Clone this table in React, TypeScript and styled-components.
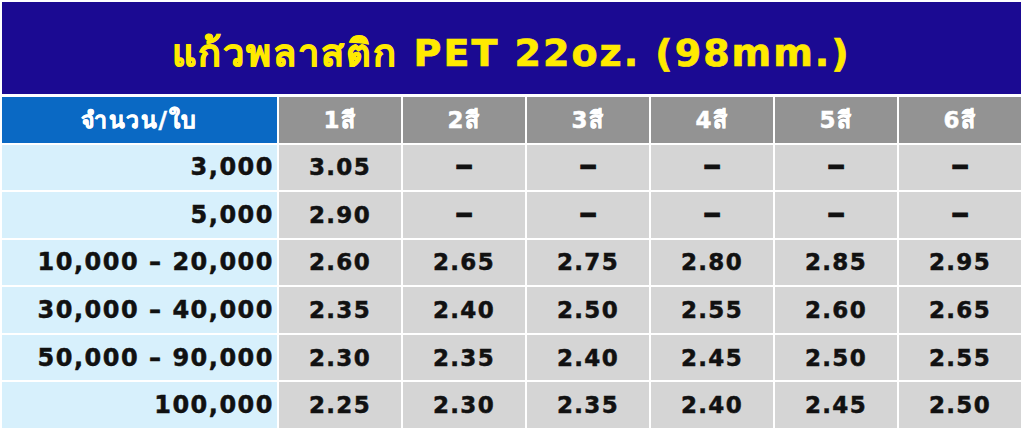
import styled, { createGlobalStyle } from 'styled-components';

const GlobalStyle = createGlobalStyle`
  html, body {
    margin: 0;
    padding: 0;
    background: #ffffff;
  }
  body {
    font-family: "DejaVu Sans", "Noto Sans", sans-serif;
  }
`;

const Sheet = styled.div`
  width: 1024px;
  height: 431px;
  box-sizing: border-box;
  padding: 2px 3px 3px 2px;
  background: #ffffff;
  display: flex;
  flex-direction: column;
  gap: 3px;
`;

const TitleBar = styled.div`
  height: 92px;
  background: #1b0a92;
  display: flex;
  align-items: center;
  justify-content: center;
`;

const Title = styled.h1`
  margin: 8px 0 0;
  color: #ffea00;
  font-size: 38px;
  font-weight: 700;
  letter-spacing: 2px;
  -webkit-text-stroke: 0.7px #ffea00;
`;

const PriceGrid = styled.div`
  flex: 1;
  display: grid;
  grid-template-columns: 275px repeat(6, 1fr);
  grid-auto-rows: 1fr;
  gap: 2px;
`;

const HeadCell = styled.div<{ $lead?: boolean }>`
  display: flex;
  align-items: center;
  justify-content: center;
  background: ${(p) => (p.$lead ? '#0a69c4' : '#939393')};
  color: #ffffff;
  font-size: 23px;
  font-weight: 700;
  letter-spacing: 1.6px;
  -webkit-text-stroke: 0.5px #ffffff;
`;

const QtyCell = styled.div`
  display: flex;
  align-items: center;
  justify-content: flex-end;
  padding-right: 3px;
  background: #d7f0fc;
  color: #111111;
  font-size: 24px;
  font-weight: 700;
  letter-spacing: 1.5px;
  -webkit-text-stroke: 0.5px #111111;
`;

const PriceCell = styled.div`
  display: flex;
  align-items: center;
  justify-content: center;
  background: #d5d5d5;
  color: #111111;
  font-size: 23px;
  font-weight: 700;
  letter-spacing: 1.3px;
  -webkit-text-stroke: 0.5px #111111;
`;

const Dash = styled.span`
  font-size: 24px;
  letter-spacing: 0;
  -webkit-text-stroke: 0.8px #111111;
`;

const colors = ['1สี', '2สี', '3สี', '4สี', '5สี', '6สี'];

const rows = [
  { qty: '3,000', prices: ['3.05', '', '', '', '', ''] },
  { qty: '5,000', prices: ['2.90', '', '', '', '', ''] },
  { qty: '10,000 – 20,000', prices: ['2.60', '2.65', '2.75', '2.80', '2.85', '2.95'] },
  { qty: '30,000 – 40,000', prices: ['2.35', '2.40', '2.50', '2.55', '2.60', '2.65'] },
  { qty: '50,000 – 90,000', prices: ['2.30', '2.35', '2.40', '2.45', '2.50', '2.55'] },
  { qty: '100,000', prices: ['2.25', '2.30', '2.35', '2.40', '2.45', '2.50'] },
];

function App() {
  return (
    <>
      <GlobalStyle />
      <Sheet>
        <TitleBar>
          <Title>แก้วพลาสติก PET 22oz. (98mm.)</Title>
        </TitleBar>
        <PriceGrid>
          <HeadCell $lead>จำนวน/ใบ</HeadCell>
          {colors.map((c) => (
            <HeadCell key={c}>{c}</HeadCell>
          ))}
          {rows.map((row) => (
            <>
              <QtyCell key={row.qty}>{row.qty}</QtyCell>
              {row.prices.map((price, i) => (
                <PriceCell key={`${row.qty}-${i}`}>
                  {price || <Dash>━</Dash>}
                </PriceCell>
              ))}
            </>
          ))}
        </PriceGrid>
      </Sheet>
    </>
  );
}

export default App;
